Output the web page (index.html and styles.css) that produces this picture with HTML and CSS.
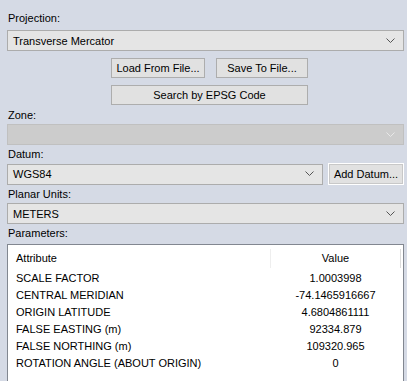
FILE: index.html
```html
<!DOCTYPE html>
<html lang="en">
  <head>
    <meta charset="UTF-8" />
    <title>Projection</title>
    <link rel="stylesheet" href="styles.css">
  </head>
  <body>
    <div class="panel">
      <div class="label first">Projection:</div>
      <div class="combo">
        <span>Transverse Mercator</span>
        <svg class="arrow" width="9" height="6" viewBox="0 0 9 6"><path d="M0.5 0.5 L4.5 4.5 L8.5 0.5" fill="none" stroke="#555" stroke-width="1"/></svg>
      </div>

      <div class="file-buttons">
        <div class="btn-row">
          <button class="btn load">Load From File...</button>
          <button class="btn save">Save To File...</button>
        </div>
        <button class="btn wide">Search by EPSG Code</button>
      </div>

      <div class="label zone">Zone:</div>
      <div class="combo disabled">
        <span></span>
        <svg class="arrow" width="9" height="6" viewBox="0 0 9 6"><path d="M0.5 0.5 L4.5 4.5 L8.5 0.5" fill="none" stroke="#e8e8e8" stroke-width="1"/></svg>
      </div>

      <div class="label">Datum:</div>
      <div class="datum-row">
        <div class="combo grow">
          <span>WGS84</span>
          <svg class="arrow" width="9" height="6" viewBox="0 0 9 6"><path d="M0.5 0.5 L4.5 4.5 L8.5 0.5" fill="none" stroke="#555" stroke-width="1"/></svg>
        </div>
        <button class="btn add">Add Datum...</button>
      </div>

      <div class="label">Planar Units:</div>
      <div class="combo">
        <span>METERS</span>
        <svg class="arrow" width="9" height="6" viewBox="0 0 9 6"><path d="M0.5 0.5 L4.5 4.5 L8.5 0.5" fill="none" stroke="#555" stroke-width="1"/></svg>
      </div>

      <div class="label">Parameters:</div>
      <div class="params">
        <div class="head">
          <div class="col-attr">Attribute</div>
          <div class="col-val">Value</div>
        </div>
        <div class="row"><div class="col-attr">SCALE FACTOR</div><div class="col-val">1.0003998</div></div>
        <div class="row"><div class="col-attr">CENTRAL MERIDIAN</div><div class="col-val">-74.1465916667</div></div>
        <div class="row"><div class="col-attr">ORIGIN LATITUDE</div><div class="col-val">4.6804861111</div></div>
        <div class="row"><div class="col-attr">FALSE EASTING (m)</div><div class="col-val">92334.879</div></div>
        <div class="row"><div class="col-attr">FALSE NORTHING (m)</div><div class="col-val">109320.965</div></div>
        <div class="row"><div class="col-attr">ROTATION ANGLE (ABOUT ORIGIN)</div><div class="col-val">0</div></div>
      </div>
    </div>
  </body>
</html>
```

FILE: styles.css
```css
body {
  margin: 0;
  padding: 0;
  background-color: #d5dae5;
  font-family: "Liberation Sans", Arial, sans-serif;
  font-size: 11px;
  color: #000;
  overflow: hidden;
}
.panel {
  display: flex;
  flex-direction: column;
  padding: 0 3px 0 7px;
  height: 381px;
  box-sizing: border-box;
}
.label {
  height: 12px;
  line-height: 12px;
  margin: 3px 0 3px 1px;
}
.label.first {
  margin-top: 12px;
  margin-bottom: 6px;
}
.label.zone {
  margin-top: 0;
}

.combo {
  height: 21px;
  box-sizing: border-box;
  border: 1px solid #acacac;
  background: #e5e5e5;
  display: flex;
  align-items: center;
  justify-content: space-between;
  padding: 0 8px 0 5px;
}
.combo.disabled {
  background: #cccccc;
  border-color: #c0c0c0;
}
.combo.grow {
  flex: 1;
}
.arrow {
  display: block;
}

/* buttons sit a bit right of centre in the original dialog */
.file-buttons {
  display: flex;
  flex-direction: column;
  align-items: flex-start;
  gap: 7px;
  margin: 7px 0 4px 104px;
}
.btn-row {
  display: flex;
  gap: 11px;
}
.btn {
  font-family: inherit;
  font-size: 11px;
  height: 20px;
  box-sizing: border-box;
  border: 1px solid #adadad;
  background: #e1e1e1;
  color: #000;
  padding: 0;
  margin: 0;
}
.btn.load {
  width: 94px;
}
.btn.save {
  width: 92px;
}
.btn.wide {
  width: 197px;
}

.datum-row {
  display: flex;
  align-items: center;
  gap: 5px;
}
.btn.add {
  width: 76px;
  height: 22px;
  border: 1px solid #ffffff;
  outline: 1px solid #c8c8c8;
  outline-offset: -2px;
  background: #e1e1e1;
}

.params {
  flex: 1;
  margin-top: 2px;
  background: #fff;
  border: 1px solid #828790;
  border-bottom: none;
  padding-left: 8px;
  padding-right: 2px;
}
.head,
.row {
  display: flex;
  height: 17px;
  line-height: 17px;
}
.head {
  margin-top: 4px;
  height: 19px;
  line-height: 19px;
}
.head .col-attr {
  border-right: 1px solid #eeeeee;
}
.head .col-val {
  border-right: 1px solid #dcdcdc;
}
.head + .row {
  margin-top: 2px;
}
.col-attr {
  width: 254px;
}
.col-val {
  flex: 1;
  text-align: center;
}
```
